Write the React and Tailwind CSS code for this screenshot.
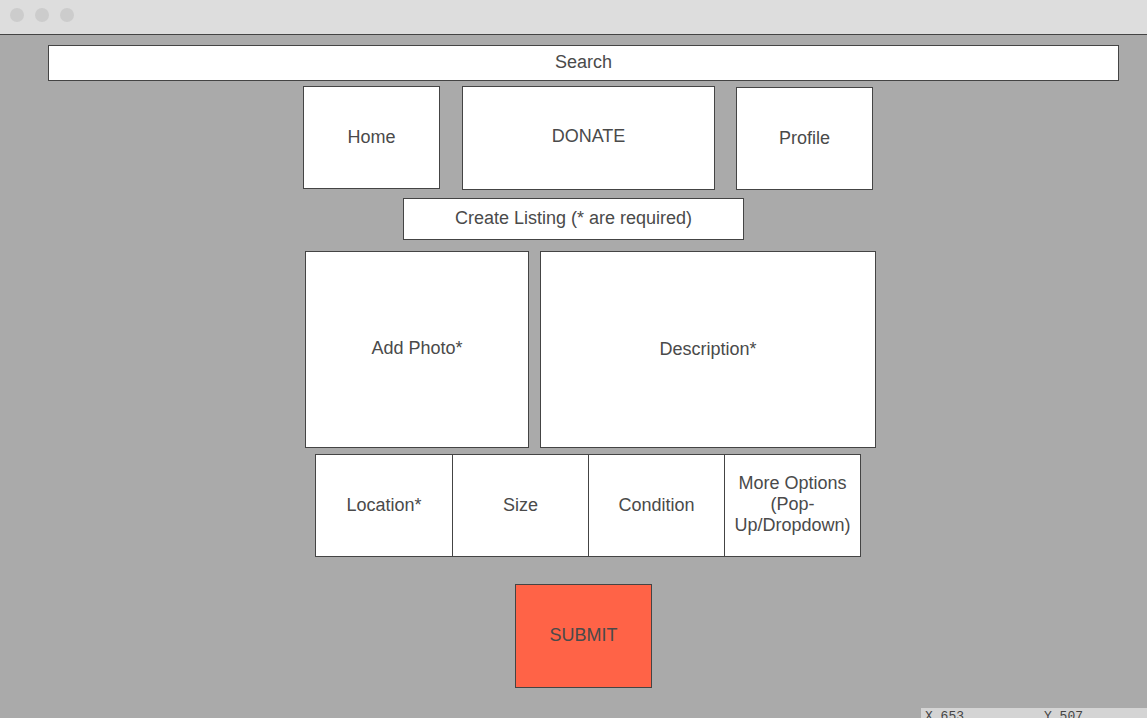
import React from "react";

const box = "flex items-center justify-center text-center bg-white border border-[#444] text-[#4a4a4a] text-[18px]";

const App = () => {
    return (
        <div className="relative w-[1147px] h-[718px] overflow-hidden bg-[#aaaaaa] font-['Liberation_Sans',Arial,sans-serif]">
            {/* window chrome */}
            <div className="h-[35px] bg-[#dddddd] border-b border-[#444] flex items-center gap-[11px] pl-[10px] pb-[5px]">
                <span className="w-[14px] h-[14px] rounded-full bg-[#cccccc]" />
                <span className="w-[14px] h-[14px] rounded-full bg-[#cccccc]" />
                <span className="w-[14px] h-[14px] rounded-full bg-[#cccccc]" />
            </div>

            <div className="flex flex-col items-start">
                <div className={`${box} ml-[48px] mt-[10px] w-[1071px] h-[36px] pb-[1px]`}>Search</div>

                <div className="flex items-start mt-[5px] ml-[303px]">
                    <div className={`${box} w-[137px] h-[103px]`}>Home</div>
                    <div className={`${box} ml-[22px] w-[253px] h-[104px] pb-[4px]`}>DONATE</div>
                    <div className={`${box} ml-[21px] mt-[1px] w-[137px] h-[103px]`}>Profile</div>
                </div>

                <div className={`${box} ml-[403px] mt-[8px] w-[341px] h-[42px] pb-[1px]`}>Create Listing (* are required)</div>

                <div className="flex items-start mt-[11px] ml-[305px] gap-[11px]">
                    <div className={`${box} w-[224px] h-[197px] pb-[2px]`}>Add Photo*</div>
                    <div className={`${box} w-[336px] h-[197px]`}>Description*</div>
                </div>

                <div className="flex mt-[6px] ml-[315px] h-[103px] bg-white border border-[#444] text-[#4a4a4a] text-[18px]">
                    <div className="w-[137px] flex items-center justify-center border-r border-[#444]">Location*</div>
                    <div className="w-[136px] flex items-center justify-center border-r border-[#444]">Size</div>
                    <div className="w-[136px] flex items-center justify-center border-r border-[#444]">Condition</div>
                    <div className="w-[135px] flex items-center justify-center text-center leading-[21px] pb-[2px]">
                        More Options (Pop-Up/Dropdown)
                    </div>
                </div>

                <div className="flex items-center justify-center ml-[515px] mt-[27px] w-[137px] h-[104px] pb-[1px] bg-[#ff6347] border border-[#444] text-[#4a4a4a] text-[18px]">
                    SUBMIT
                </div>
            </div>

            {/* coordinate readout, clipped at the window's lower edge */}
            <div className="absolute left-[921px] top-[708px] w-[226px] h-[10px] bg-[#d4d4d4] overflow-hidden font-['Liberation_Mono',monospace] text-[13px] text-[#444]">
                <span className="absolute left-[4px] top-[2px] leading-none">X 653</span>
                <span className="absolute left-[123px] top-[2px] leading-none">Y 507</span>
            </div>
        </div>
    );
};

export default App;
